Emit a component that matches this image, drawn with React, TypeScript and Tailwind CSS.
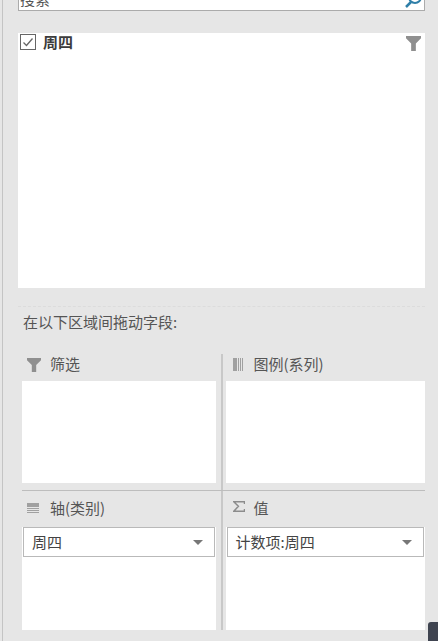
import { ReactNode } from 'react';

const font = { fontFamily: '"Noto Sans CJK SC", "Liberation Sans", sans-serif' };

function FunnelIcon({ className }: { className: string }) {
  return (
    <svg viewBox="0 0 16 16" className={className}>
      <path d="M0 0h16v2.5L10.5 8v8h-5V8L0 2.5z" fill="#8f8f8f" />
    </svg>
  );
}

function BarsIcon() {
  return (
    <svg viewBox="0 0 11 13" className="w-[11px] h-[13px]">
      <path d="M0 0h4v13H0zM5 0h1v13H5zM7 0h1v13H7zM9 0h1v13H9z" fill="#a0a0a0" />
    </svg>
  );
}

function RowsIcon() {
  return (
    <svg viewBox="0 0 12 10" className="w-[12px] h-[10px]">
      <path d="M0 0h12v4H0zM0 5h12v1H0zM0 7h12v1H0zM0 9h12v1H0z" fill="#a0a0a0" />
    </svg>
  );
}

function SigmaIcon() {
  return (
    <svg viewBox="0 0 12 11" className="w-[12px] h-[11px] mb-[3px]">
      <path d="M11.5 3V.7H.8l4.6 4.6L.8 10.3h10.7V8" fill="none" stroke="#8c8c8c" strokeWidth="1.5" />
    </svg>
  );
}

function FieldPill({ label }: { label: string }) {
  return (
    <div className="h-[30px] mx-[1px] mt-[2px] bg-white border border-[#b9b9b9] flex items-center justify-between pl-[8px] pr-[11px]">
      <span className="text-[15px] text-[#444]">{label}</span>
      <span className="w-0 h-0 border-x-[5px] border-x-transparent border-t-[5px] border-t-[#777]" />
    </div>
  );
}

function Area({ icon, title, children, left, header, bodyH }: { icon: ReactNode; title: string; children?: ReactNode; left?: boolean; header: string; bodyH: string }) {
  return (
    <div className={left ? 'w-[194px]' : 'w-[200px]'}>
      <div className={`flex items-center ${header}`}>
        <span className={`flex w-[28px] ${left ? 'pl-[5px]' : 'pl-[7px]'}`}>{icon}</span>
        <span className="text-[15px] text-[#555]">{title}</span>
      </div>
      <div className={`bg-white ${bodyH}`}>{children}</div>
    </div>
  );
}

function Splitter() {
  return (
    <div className="w-[10px] flex pl-[5px]">
      <span className="w-[2px] bg-[#c8c8c8]" />
    </div>
  );
}

export default function App() {
  return (
    <div className="w-[438px] h-[641px] overflow-hidden bg-[#e6e6e6] relative" style={font}>
      <div className="h-[641px] ml-[2px] border-l border-[#c4c4c4] pl-[15px] pr-[13px]">
        {/* search box, cut off by the top of the window */}
        <div className="h-[11px] bg-white border-b border-x border-[#ababab] overflow-hidden flex items-end justify-between pl-[1px] pr-[1px]">
          <span className="text-[15px] leading-[20px] text-[#555] mb-[1px]">搜索</span>
          <svg viewBox="0 0 20 20" className="w-[20px] h-[20px] mb-[-1px]">
            <circle cx="12" cy="6" r="6" fill="none" stroke="#2f7fa8" strokeWidth="2" />
            <path d="M8 11l-5 5" stroke="#2f7fa8" strokeWidth="2.5" />
          </svg>
        </div>

        {/* field list */}
        <div className="mt-[22px] h-[255px] bg-white pl-[2px] pr-[4px] pt-[1px] flex justify-between items-start">
          <div className="flex items-center">
            <span className="w-[16px] h-[16px] border border-[#666] flex items-center justify-center">
              <svg viewBox="0 0 14 14" className="w-[14px] h-[14px]">
                <path d="M2.5 7.5l3 3 6-7" fill="none" stroke="#666" strokeWidth="1.3" />
              </svg>
            </span>
            <span className="ml-[7px] text-[15px] leading-[16px] font-bold text-[#3c3c3c]">周四</span>
          </div>
          <FunnelIcon className="w-[15px] h-[15px] mt-[2px]" />
        </div>

        <div className="mt-[18px] border-t border-dashed border-[#dcdcdc]" />
        <div className="mt-[5px] ml-[5px] text-[15px] leading-[20px] text-[#555]">在以下区域间拖动字段:</div>

        {/* drop areas */}
        <div className="mt-[22px] ml-[4px]">
          <div className="flex">
            <Area left title="筛选" header="h-[27px] pb-[6px]" bodyH="h-[102px]" icon={<FunnelIcon className="w-[14px] h-[14px]" />} />
            <Splitter />
            <Area title="图例(系列)" header="h-[27px] pb-[6px]" bodyH="h-[102px]" icon={<BarsIcon />} />
          </div>
          <div className="flex h-[8px] border-b border-[#bdbdbd]">
            <div className="w-[194px]" />
            <Splitter />
          </div>
          <div className="flex">
            <Area left title="轴(类别)" header="h-[34px]" bodyH="h-[103px]" icon={<RowsIcon />}>
              <FieldPill label="周四" />
            </Area>
            <Splitter />
            <Area title="值" header="h-[34px]" bodyH="h-[103px]" icon={<SigmaIcon />}>
              <FieldPill label="计数项:周四" />
            </Area>
          </div>
        </div>
      </div>
      <div className="absolute right-0 bottom-0 w-[10px] h-[19px] bg-[#3f4450] rounded-tl-[3px]" />
    </div>
  );
}
